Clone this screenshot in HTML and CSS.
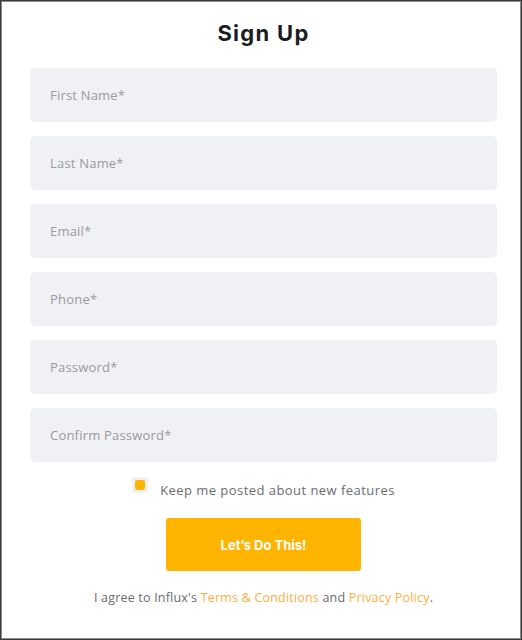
FILE: index.html
```html
<!DOCTYPE html>
<html>
<head>
<meta charset="utf-8">
<link rel="stylesheet" href="styles.css">
</head>
<body>
<div class="frame">
  <h1 class="title">Sign Up</h1>
  <form class="form">
    <div class="field">First Name*</div>
    <div class="field">Last Name*</div>
    <div class="field">Email*</div>
    <div class="field">Phone*</div>
    <div class="field">Password*</div>
    <div class="field">Confirm Password*</div>
    <label class="check">
      <span class="box"><span class="tick"></span></span>
      <span class="check-text">Keep me posted about new features</span>
    </label>
    <div class="actions"><button type="button" class="btn">Let’s Do This!</button></div>
    <p class="agree">I agree to Influx's <a class="link">Terms &amp; Conditions</a> and <a class="link">Privacy Policy</a>.</p>
  </form>
</div>
</body>
</html>
```
FILE: styles.css
```css
html, body { margin: 0; padding: 0; background: #fff; }
body { font-family: "Open Sans", "Liberation Sans", sans-serif; }
.frame {
  box-sizing: border-box;
  width: 522px;
  height: 640px;
  border: 1px solid #3c3c3c;
  box-shadow: inset 0 0 0 1px #8a8a8a;
  padding: 17px 24px 0 29px;
}
.title {
  margin: 0 0 20px;
  text-align: center;
  font-family: "Inter", "Liberation Sans", sans-serif;
  font-weight: 700;
  font-size: 22px;
  line-height: 30px;
  color: #1c1d24;
  letter-spacing: 1.3px;
}
.form { display: flex; flex-direction: column; gap: 14px; }
.field {
  height: 54px;
  box-sizing: border-box;
  background: #f0f1f5;
  border-radius: 5px;
  padding: 0 20px;
  display: flex;
  align-items: center;
  font-size: 13px;
  letter-spacing: 0.2px;
  color: #9a9a9f;
}
.check {
  display: flex;
  align-items: center;
  justify-content: center;
  gap: 12px;
  margin-top: 2px;
  height: 20px;
}
.box {
  width: 16px; height: 16px;
  background: #eef0f4;
  border-radius: 3px;
  display: flex; align-items: center; justify-content: center;
  margin-top: -7px;
}
.tick { width: 10px; height: 10px; background: #ffb400; border-radius: 2px; }
.check-text { font-size: 13px; letter-spacing: 0.45px; color: #6b6b70; margin-top: 4px; }
.actions { display: flex; justify-content: center; margin-top: 6px; }
.btn {
  width: 195px; height: 53px;
  border: none; border-radius: 3px;
  background: #ffb400;
  color: #fff;
  font-family: "Inter", "Liberation Sans", sans-serif;
  font-weight: 700;
  font-size: 13px;
}
.agree {
  margin: 4px 0 0;
  text-align: center;
  font-size: 12.5px;
  letter-spacing: 0.2px;
  color: #6b6b70;
}
.link { color: #ffae3d; }
```
